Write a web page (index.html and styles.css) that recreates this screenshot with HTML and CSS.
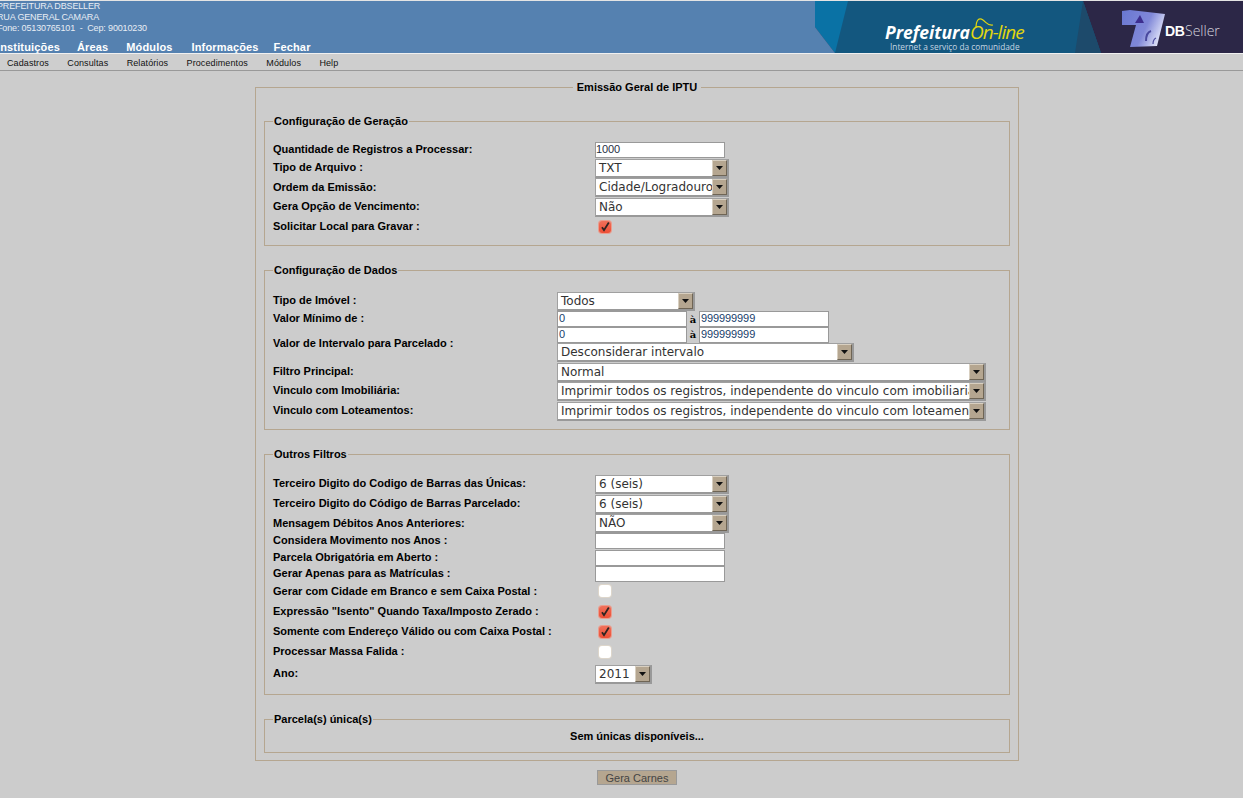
FILE: index.html
```html
<!DOCTYPE html>
<html lang="pt-BR">
<head>
<meta charset="utf-8">
<title>Emissão Geral de IPTU</title>
<link rel="stylesheet" href="styles.css">
</head>
<body>
<svg class="defs" width="0" height="0" aria-hidden="true">
  <symbol id="arrow" viewBox="0 0 7 4"><path d="M0 0h7L3.5 4z" fill="#111"/></symbol>
  <symbol id="tick" viewBox="0 0 12 12"><path d="M3 6.2l2 3L9.8 1.5" fill="none" stroke="#2f2422" stroke-width="1.8"/></symbol>
</svg>
<header class="top">
  <div class="top-left">
    <div class="inst">
      <div>PREFEITURA DBSELLER</div>
      <div>RUA GENERAL CAMARA</div>
      <div>Fone: 05130765101 &nbsp;-&nbsp; Cep: 90010230</div>
    </div>
    <nav class="main-menu">
      <a>Instituições</a><a>Áreas</a><a>Módulos</a><a>Informações</a><a>Fechar</a>
    </nav>
  </div>
  <svg class="banner" width="428" height="52" viewBox="0 0 428 52">
    <defs>
      <linearGradient id="cube" x1="0" y1="0.1" x2="1" y2="0.5">
        <stop offset="0" stop-color="#6a78d2"/><stop offset="0.6" stop-color="#8088d8"/><stop offset="1" stop-color="#dfe2f8"/>
      </linearGradient>
      <filter id="soft" x="-5%" y="-5%" width="110%" height="110%"><feGaussianBlur stdDeviation="0.6"/></filter>
    </defs>
    <rect width="428" height="52" fill="#2c2747"/>
    <path d="M0 0H268L286 52H20L0 26z" fill="#13577f"/>
    <path d="M0 0H33L20 52L0 26z" fill="#0a72a5"/>
    <path d="M0 26L20 52H0z" fill="#5581b0"/>
    <path d="M268 0L260 52H286z" fill="#1d4a6b"/>
    <text x="70" y="38" class="b-pref">Prefeitura</text>
    <text x="155" y="38" class="b-on">On-line</text>
    <path d="M161 27c0-8 3-11 7-8s5 6 10 5" fill="none" stroke="#e2d60f" stroke-width="1.2"/>
    <text x="75" y="49" class="b-sub">Internet a serviço da comunidade</text>
    <g filter="url(#soft)">
      <path d="M307 10l8-1 35 4-8 32-27 1 6-22-14 0z" fill="url(#cube)"/>
      <path d="M320 22l5-8 4 8z" fill="#3d2f8f"/>
      <path d="M331 40c0-6 2-9 5-10" fill="none" stroke="#4a4a9e" stroke-width="2"/>
      <path d="M338 43c0-3 1-5 3-6" fill="none" stroke="#4a4a9e" stroke-width="1.2"/>
    </g>
    <text x="350" y="35" class="b-db">DB</text><text x="370" y="35" class="b-seller">Seller</text>
  </svg>
</header>
<nav class="sub-menu">
  <a>Cadastros</a><a>Consultas</a><a>Relatórios</a><a>Procedimentos</a><a>Módulos</a><a>Help</a>
</nav>
<main class="page">
  <fieldset class="box main-box">
    <legend class="main-legend">Emissão Geral de IPTU</legend>

    <fieldset class="box group">
      <legend>Configuração de Geração</legend>
      <div class="row row-input"><label class="lab">Quantidade de Registros a Processar:</label><span class="input w130">1000</span></div>
      <div class="row"><label class="lab">Tipo de Arquivo :</label><div class="select w134"><span class="val">TXT</span><span class="btn"><svg width="7" height="4"><use href="#arrow"/></svg></span></div></div>
      <div class="row row-19"><label class="lab">Ordem da Emissão:</label><div class="select w134"><span class="val">Cidade/Logradouro</span><span class="btn"><svg width="7" height="4"><use href="#arrow"/></svg></span></div></div>
      <div class="row"><label class="lab">Gera Opção de Vencimento:</label><div class="select w134"><span class="val">Não</span><span class="btn"><svg width="7" height="4"><use href="#arrow"/></svg></span></div></div>
      <div class="row"><label class="lab">Solicitar Local para Gravar :</label><span class="check on"><svg width="12" height="12"><use href="#tick"/></svg></span></div>
    </fieldset>

    <fieldset class="box group">
      <legend>Configuração de Dados</legend>
      <div class="alt">
        <div class="row"><label class="lab">Tipo de Imóvel :</label><div class="select w138"><span class="val">Todos</span><span class="btn"><svg width="7" height="4"><use href="#arrow"/></svg></span></div></div>
        <div class="row row-input"><label class="lab">Valor Mínimo de :</label><span class="input w130">0</span><b class="a">à</b><span class="input w130">999999999</span></div>
        <div class="span-row">
          <label class="lab">Valor de Intervalo para Parcelado :</label>
          <div>
            <div class="row row-input row-15"><span class="input w130">0</span><b class="a">à</b><span class="input w130">999999999</span></div>
            <div class="row"><div class="select w297"><span class="val">Desconsiderar intervalo</span><span class="btn"><svg width="7" height="4"><use href="#arrow"/></svg></span></div></div>
          </div>
        </div>
        <div class="row"><label class="lab">Filtro Principal:</label><div class="select w429"><span class="val">Normal</span><span class="btn"><svg width="7" height="4"><use href="#arrow"/></svg></span></div></div>
        <div class="row row-19"><label class="lab">Vinculo com Imobiliária:</label><div class="select w429"><span class="val">Imprimir todos os registros, independente do vinculo com imobiliaria</span><span class="btn"><svg width="7" height="4"><use href="#arrow"/></svg></span></div></div>
        <div class="row"><label class="lab">Vinculo com Loteamentos:</label><div class="select w429"><span class="val">Imprimir todos os registros, independente do vinculo com loteamento</span><span class="btn"><svg width="7" height="4"><use href="#arrow"/></svg></span></div></div>
      </div>
    </fieldset>

    <fieldset class="box group group-3">
      <legend>Outros Filtros</legend>
      <div class="row"><label class="lab">Terceiro Digito do Codigo de Barras das Únicas:</label><div class="select w134"><span class="val">6 (seis)</span><span class="btn"><svg width="7" height="4"><use href="#arrow"/></svg></span></div></div>
      <div class="row"><label class="lab">Terceiro Digito do Código de Barras Parcelado:</label><div class="select w134"><span class="val">6 (seis)</span><span class="btn"><svg width="7" height="4"><use href="#arrow"/></svg></span></div></div>
      <div class="row row-19"><label class="lab">Mensagem Débitos Anos Anteriores:</label><div class="select w134"><span class="val">NÃO</span><span class="btn"><svg width="7" height="4"><use href="#arrow"/></svg></span></div></div>
      <div class="row row-input"><label class="lab">Considera Movimento nos Anos :</label><span class="input w130"></span></div>
      <div class="row row-input row-17"><label class="lab">Parcela Obrigatória em Aberto :</label><span class="input w130"></span></div>
      <div class="row row-input"><label class="lab">Gerar Apenas para as Matrículas :</label><span class="input w130"></span></div>
      <div class="row row-lift"><label class="lab">Gerar com Cidade em Branco e sem Caixa Postal :</label><span class="check"></span></div>
      <div class="row"><label class="lab">Expressão "Isento" Quando Taxa/Imposto Zerado :</label><span class="check on"><svg width="12" height="12"><use href="#tick"/></svg></span></div>
      <div class="row"><label class="lab">Somente com Endereço Válido ou com Caixa Postal :</label><span class="check on"><svg width="12" height="12"><use href="#tick"/></svg></span></div>
      <div class="row"><label class="lab">Processar Massa Falida :</label><span class="check"></span></div>
      <div class="row row-19 row-ano"><label class="lab">Ano:</label><div class="select w57"><span class="val">2011</span><span class="btn"><svg width="7" height="4"><use href="#arrow"/></svg></span></div></div>
    </fieldset>

    <fieldset class="box group group-4">
      <legend>Parcela(s) única(s)</legend>
      <div class="none">Sem únicas disponíveis...</div>
    </fieldset>
  </fieldset>
  <div class="actions"><button class="submit" type="button">Gera Carnes</button></div>
</main>
</body>
</html>
```
FILE: styles.css
```css
html, body { margin: 0; padding: 0; height: 100%; overflow: hidden; }
body { background: #cccccc; color: #000; font: 11px "Liberation Sans", Arial, sans-serif; }
.defs { position: absolute; }

.top { display: flex; justify-content: space-between; height: 52px; background: #5581b0; border-top: 1px solid #e4e4e4; border-bottom: 1px solid #f0f0f0; }
.top-left { display: flex; flex-direction: column; color: #fff; }
.inst { margin-left: -3px; font-size: 9px; letter-spacing: -.15px; line-height: 11px; color: #e8edf4; }
.main-menu { display: flex; gap: 18px; margin-left: -3px; margin-top: 6px; font-size: 11px; font-weight: bold; letter-spacing: .15px; color: #fff; line-height: 14px; }
.main-menu a:nth-child(2) { margin-left: -1px; }
.main-menu a:nth-child(4) { margin-left: 1px; }
.main-menu a:nth-child(5) { margin-left: -3px; }
.banner { display: block; flex: none; }
.banner text { font-family: "Open Sans", "Liberation Sans", sans-serif; }
.b-pref { font-size: 17.5px; font-weight: 700; font-style: italic; fill: #fff; }
.b-on { font-size: 19px; font-style: italic; fill: #e2d60f; letter-spacing: -1px; }
.b-sub { font-size: 8.3px; fill: #c7d6e2; }
.banner .b-db { font-family: "Liberation Sans", sans-serif; font-size: 14px; font-weight: 700; letter-spacing: -.3px; fill: #fff; }
.b-seller { font-size: 14px; font-weight: 300; fill: #d5d5de; }

.sub-menu { display: flex; gap: 18.4px; box-sizing: border-box; height: 17px; padding: 1px 0 0 7px; align-items: center; background: #cecece; border-bottom: 1px solid #999; font-size: 9px; letter-spacing: .1px; color: #111; }

.page { margin-left: 255px; width: 764px; }
.box { margin: 0; min-width: 0; border: 1px solid #b5a690; }
.main-box { margin-top: 10px; padding: 21px 8px 7px; }
legend { padding: 0 1px; font-weight: bold; font-size: 11px; line-height: 13px; }
.main-legend { margin: 0 auto; padding: 0 4px; }
.group { padding: 14px 8px 8px; margin-bottom: 18px; }
.group:last-child { margin-bottom: 0; }
.group-3 { padding-top: 13px; padding-bottom: 10px; }
.group-4 { padding: 3px 8px 9px; }

.row { display: flex; align-items: center; height: 20px; }
.row-19 { height: 19px; }
.row-input { height: 16px; }
.row-15 { height: 15px; }
.row-17 { height: 17px; }
.row-ano { margin-top: 3px; }
.row-ano .lab { padding-bottom: 3px; }
.lab { flex: none; width: 322px; padding-bottom: 2px; font-weight: bold; font-size: 11px; white-space: nowrap; }
.alt .lab { width: 284px; }
.span-row .lab, .alt .row-19 .lab { padding-bottom: 4px; }
.span-row { display: flex; align-items: center; }
.row-lift .check { margin-bottom: 2px; }

.input { display: block; flex: none; box-sizing: border-box; height: 16px; background: #fff; border: 1px solid #999; font-size: 11px; letter-spacing: -.1px; line-height: 12px; color: #1f2f44; }
.alt .input { padding-left: 1px; color: #17406b; }
.w130 { width: 130px; }
.a { width: 12px; text-align: center; font-size: 10px; font-family: "DejaVu Serif", serif; }

.select { display: flex; flex: none; box-sizing: border-box; height: 19px; background: #fff; border: 1px solid #a0a0a0; border-right: 2px solid #999; border-bottom: 2px solid #999; font: 12px "DejaVu Sans", sans-serif; color: #333; }
.val { flex: 1; min-width: 0; overflow: hidden; white-space: nowrap; padding-left: 3px; line-height: 17px; }
.btn { flex: none; width: 15px; display: flex; align-items: center; justify-content: center; background: #b5a690; border: 1px solid; border-color: #d8cfc0 #6f6555 #6f6555 #d8cfc0; box-sizing: border-box; }
.btn svg { display: block; }
.w134 { width: 134px; }
.w138 { width: 138px; }
.w297 { width: 297px; }
.w429 { width: 429px; }
.w57 { width: 57px; }

.check { flex: none; box-sizing: border-box; width: 12px; height: 12px; margin-left: 4px; border-radius: 3px; background: #fff; box-shadow: 0 0 0 1px #ddd6cb; display: block; }
.check.on { background: linear-gradient(#f0705a, #ee4f36); box-shadow: 0 0 0 1px #ea9d8e; }
.check svg { display: block; }

.none { text-align: center; font-weight: bold; font-size: 11px; line-height: 14px; }

.actions { display: flex; justify-content: center; padding-top: 9px; }
.submit { box-sizing: border-box; width: 80px; height: 15px; padding: 0; border: 1px solid #999; background: #b5a690; color: #444; font: 11px "Liberation Sans", sans-serif; }
```
